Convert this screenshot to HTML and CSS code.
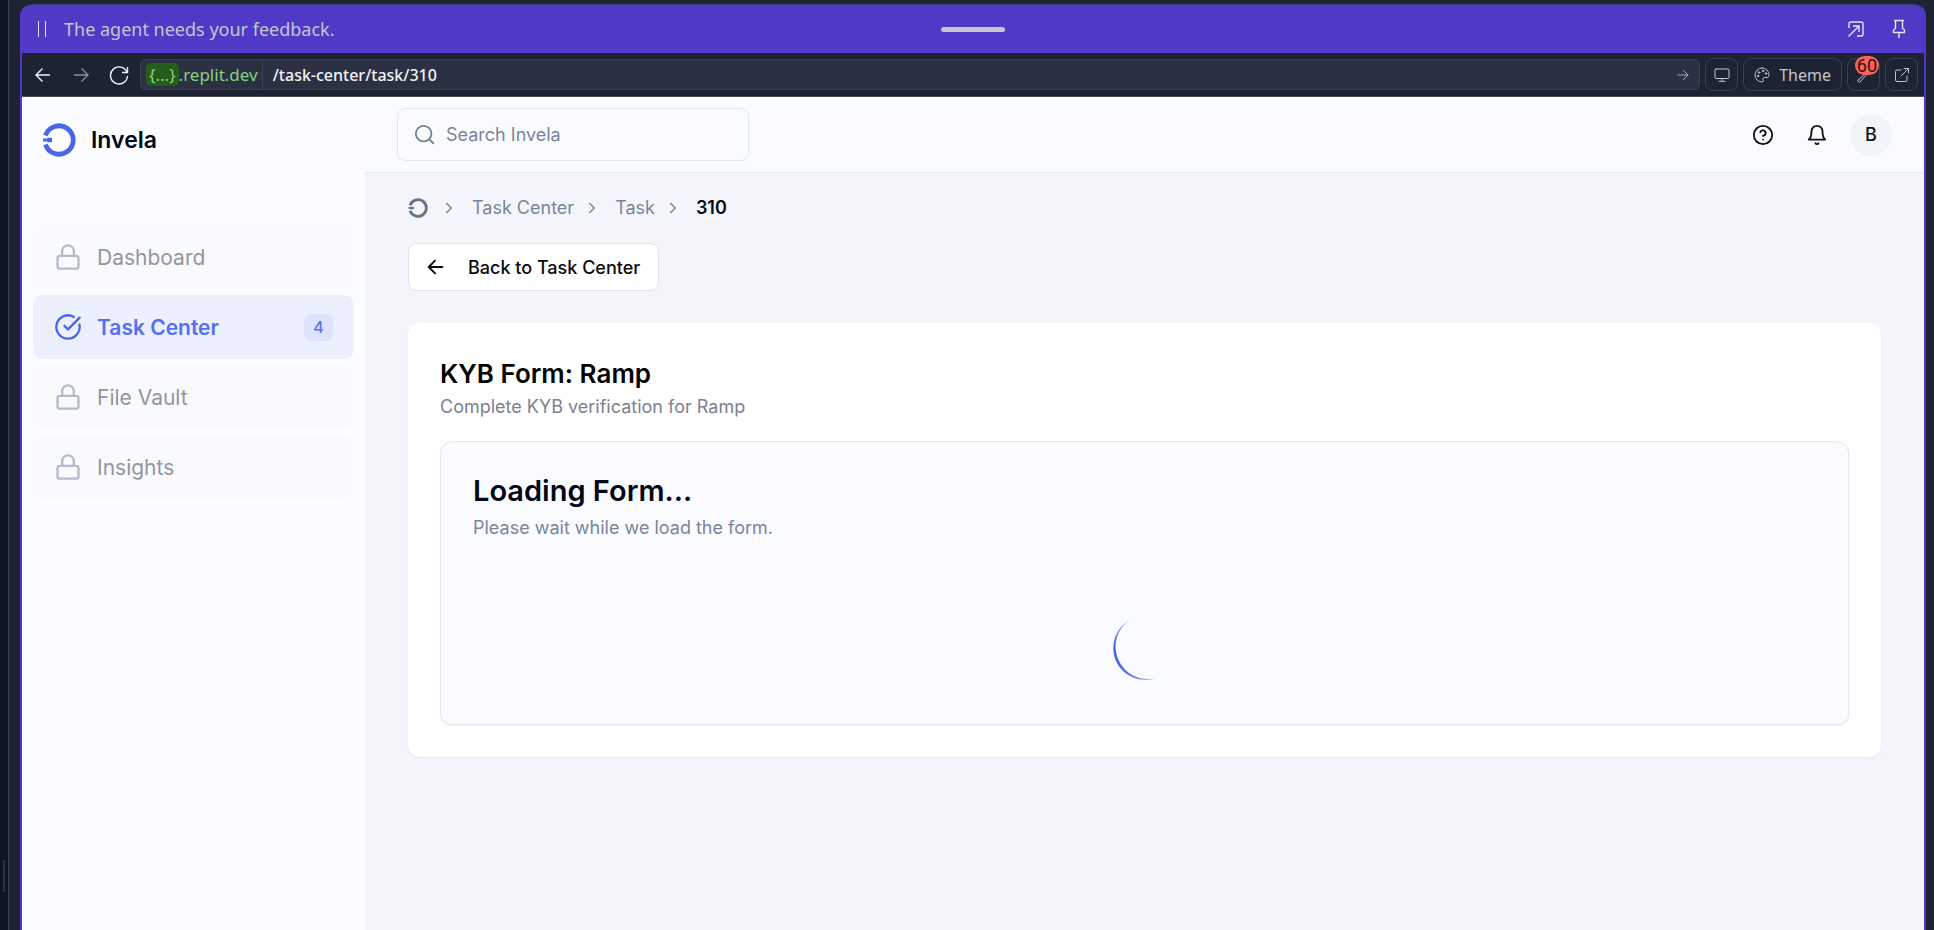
FILE: index.html
```html
<!DOCTYPE html>
<html lang="en">
<head>
<meta charset="utf-8">
<title>Invela – Task 310</title>
<link rel="stylesheet" href="styles.css">
</head>
<body>
<svg class="defs" aria-hidden="true">
  <symbol id="lock" viewBox="0 0 24 24"><rect x="3" y="11" width="18" height="11" rx="2"/><path d="M7 11V7a5 5 0 0 1 10 0v4"/></symbol>
  <symbol id="chevron" viewBox="0 0 24 24"><path d="m9 18 6-6-6-6"/></symbol>
  <symbol id="logo" viewBox="0 0 34 34"><path d="M3.500 12.600A14.200 14.200 0 1 1 3.500 21.400" stroke-width="4.800"/><path d="M1 15.400h4.500v-.6h4.500v4.400h-4.500v-.6H1z" fill="currentColor" stroke="none"/></symbol>
</svg>
<div class="desk">
  <aside class="rail"><span class="rail-grip"></span></aside>
  <div class="window">
    <header class="agent-bar">
      <div class="agent-status">
        <svg class="icon-pause" viewBox="0 0 12 16"><path d="M2.500 0v16M9.500 0v16"/></svg>
        <span>The agent needs your feedback.</span>
      </div>
      <span class="drag-handle"></span>
      <div class="agent-actions">
        <button class="bare" aria-label="Open out"><svg class="icon thin" viewBox="0 0 20 20"><path d="M3 9V5a2 2 0 0 1 2-2h10a2 2 0 0 1 2 2v10a2 2 0 0 1-2 2h-4M2.500 17.500 13 7M7 7h6v6"/></svg></button>
        <button class="bare" aria-label="Pin"><svg class="icon thin" viewBox="0 0 20 20"><path d="M5 1.500h10M6.500 1.500v8L4.500 11v2.500h11V11l-2-1.500v-8M10 13.500V19"/></svg></button>
      </div>
    </header>
    <div class="toolbar">
      <div class="history">
        <button class="bare" aria-label="Back"><svg class="icon thin" viewBox="0 0 20 20"><path d="M17 10H3M9.500 3.500 3 10l6.500 6.500"/></svg></button>
        <button class="bare dim" aria-label="Forward"><svg class="icon thin" viewBox="0 0 20 20"><path d="M3 10h14M10.500 3.500 17 10l-6.500 6.500"/></svg></button>
        <button class="bare" aria-label="Reload"><svg class="icon thin" viewBox="0 0 20 20"><path d="M18.500 2v5.500H13M18 7.500A8.500 8.500 0 1 0 18.500 11"/></svg></button>
      </div>
      <div class="url">
        <span class="host"><span class="chip">{...}</span>.replit.dev</span>
        <input class="path" aria-label="Path" value="/task-center/task/310">
        <button class="bare go" aria-label="Go"><svg class="icon small" viewBox="0 0 16 16"><path d="M3 8h10M8.500 3.500 13 8l-4.500 4.500"/></svg></button>
      </div>
      <button class="tool" aria-label="Device"><svg class="icon small" viewBox="0 0 16 16"><rect x="1" y="2" width="14" height="9.500" rx="1"/><path d="M8 11.500V14M5 14.300h6"/></svg></button>
      <button class="tool wide"><svg class="icon small" viewBox="0 0 16 16"><path d="M8 1a7 7 0 0 0 0 14c1.500 0 1.700-1.200 1.100-2-.8-1.300 0-2.500 1.400-2.500H13c1.300 0 2-1 2-2.500C15 4 12 1 8 1z"/><circle cx="5" cy="5.500" r=".8"/><circle cx="9" cy="4" r=".8"/><circle cx="4" cy="9" r=".8"/><circle cx="12" cy="6.500" r=".8"/></svg>Theme</button>
      <button class="tool" aria-label="Dev tools"><svg class="icon small" viewBox="0 0 16 16"><path d="M9.500 6.500 2 13a1.500 1.500 0 0 0 2 2l6.500-7.500c3 .8 5-1.500 4.500-4.500l-2.500 2-2-2 2-2C9.500.500 8.500 4 9.500 6.500z"/></svg><span class="count">60</span></button>
      <button class="tool" aria-label="New tab"><svg class="icon small" viewBox="0 0 16 16"><path d="M7 3H3a1.500 1.500 0 0 0-1.500 1.500V13A1.500 1.500 0 0 0 3 14.500h8.500A1.500 1.500 0 0 0 13 13V9M7 9l7.500-7.500M10 1.500h4.500V6"/></svg></button>
    </div>
    <div class="app">
      <nav class="sidebar">
        <div class="brand"><svg class="brand-logo"><use href="#logo"/></svg>Invela</div>
        <ul class="menu">
          <li><a class="item" href="#"><svg class="icon nav"><use href="#lock"/></svg>Dashboard</a></li>
          <li><a class="item active" href="#"><svg class="icon nav" viewBox="0 0 24 24"><path d="M21.800 10A10 10 0 1 1 17 3.340"/><path d="m9 11 3 3L22 4"/></svg>Task Center<span class="badge">4</span></a></li>
          <li><a class="item" href="#"><svg class="icon nav"><use href="#lock"/></svg>File Vault</a></li>
          <li><a class="item" href="#"><svg class="icon nav"><use href="#lock"/></svg>Insights</a></li>
        </ul>
      </nav>
      <div class="content">
        <header class="topbar">
          <label class="search"><svg class="icon mid" viewBox="0 0 24 24"><circle cx="10.500" cy="10.500" r="8.500"/><path d="m21 21-4.500-4.500"/></svg><input type="search" aria-label="Search Invela" placeholder="Search Invela"></label>
          <div class="account">
            <button class="bare" aria-label="Help"><svg class="icon mid" viewBox="0 0 24 24"><circle cx="12" cy="12" r="10"/><path d="M9.090 9a3 3 0 0 1 5.830 1c0 2-3 3-3 3M12 17h.01"/></svg></button>
            <button class="bare" aria-label="Notifications"><svg class="icon mid" viewBox="0 0 24 24"><path d="M6 8a6 6 0 0 1 12 0c0 7 3 9 3 9H3s3-2 3-9M10.300 21a1.940 1.940 0 0 0 3.400 0"/></svg></button>
            <button class="avatar">B</button>
          </div>
        </header>
        <main class="page">
          <nav class="crumbs" aria-label="Breadcrumb">
            <a href="#" aria-label="Home"><svg class="crumb-logo"><use href="#logo"/></svg></a>
            <svg class="icon sep"><use href="#chevron"/></svg>
            <a href="#">Task Center</a>
            <svg class="icon sep tight"><use href="#chevron"/></svg>
            <a href="#">Task</a>
            <svg class="icon sep tight"><use href="#chevron"/></svg>
            <span class="current">310</span>
          </nav>
          <button class="back"><svg class="icon mid" viewBox="0 0 24 24"><path d="m11 19-7-7 7-7M19 12H4"/></svg>Back to Task Center</button>
          <section class="card">
            <h1>KYB Form: Ramp</h1>
            <p class="lead">Complete KYB verification for Ramp</p>
            <div class="panel">
              <h2>Loading Form...</h2>
              <p class="note">Please wait while we load the form.</p>
              <div class="loader">
                <svg class="spinner" viewBox="0 0 64 64" role="img" aria-label="Loading">
                  <defs><linearGradient id="fade" gradientUnits="userSpaceOnUse" x1="30" y1="30" x2="3" y2="41"><stop offset="0" stop-color="#4965ec" stop-opacity=".4"/><stop offset="1" stop-color="#4965ec"/></linearGradient></defs>
                  <path fill="url(#fade)" d="M18 3.200A32 32 0 0 0 43 62A32.300 32.300 0 0 1 18 3.200z"/>
                </svg>
              </div>
            </div>
          </section>
        </main>
      </div>
    </div>
  </div>
</div>
</body>
</html>
```
FILE: styles.css
```css
* { box-sizing: border-box; }
body { margin: 0; font-family: Inter, "Liberation Sans", sans-serif; font-size: 18px; color: #020817; background: #1d2333; }
h1, h2, p, ul { margin: 0; padding: 0; }
ul { list-style: none; }
a { color: inherit; text-decoration: none; }
button, input { font: inherit; color: inherit; }
svg { display: block; flex: none; }
.defs { position: absolute; width: 0; height: 0; }

.desk { display: flex; min-height: 100vh; }
.rail { width: 9px; margin-right: 11px; background: #0e1525; border-right: 1px solid #3c4253; display: flex; align-items: flex-end; padding: 0 0 38px 3px; }
.rail-grip { width: 2px; height: 32px; background: #2b3245; }
.window { flex: 1; min-width: 0; margin: 4px 8px 0 0; display: flex; flex-direction: column; border: 2px solid #4f39c6; border-top: 1px solid #3a3970; border-bottom: 0; border-radius: 12px 12px 0 0; background: #4f39c6; }

.icon { width: 24px; height: 24px; fill: none; stroke: currentColor; stroke-width: 2; stroke-linecap: round; stroke-linejoin: round; }
.icon.thin { width: 20px; height: 20px; stroke-width: 1.4; stroke-linecap: butt; stroke-linejoin: miter; }
.icon.small { width: 16px; height: 16px; stroke-width: 1; }
.icon.mid { width: 22px; height: 22px; }
.icon.nav { width: 28px; height: 28px; }
.bare { border: 0; padding: 0; background: none; }

.agent-bar { height: 48px; padding: 0 15px 0 14px; display: grid; grid-template-columns: 1fr auto 1fr; align-items: center; color: #e8e6f5; }
.agent-status { display: flex; align-items: center; gap: 16px; font-family: "Noto Sans", sans-serif; font-size: 18px; color: #c6c6d2; }
.icon-pause { width: 12px; height: 16px; stroke: #e8e6f5; stroke-width: 1; }
.drag-handle { width: 64px; height: 5px; border-radius: 3px; background: #c3c6cc; }
.agent-actions { display: flex; justify-content: flex-end; gap: 23px; }

.toolbar { height: 44px; padding: 0 6px 0 11px; display: flex; align-items: center; gap: 5px; background: #1d2333; border-bottom: 1px solid #4a4d5c; color: #f2f4f8; font-family: "Noto Sans", sans-serif; font-size: 17px; }
.history { display: flex; gap: 18px; padding-right: 6px; }
.dim { color: #8b909d; }
.url { flex: 1; height: 31px; display: flex; align-items: stretch; background: #2b3043; border: 1px solid #3b4055; border-radius: 6px; }
.host { display: flex; align-items: center; padding: 0 4px 0 5px; color: #84d27c; border-right: 1px solid #3b4055; }
.chip { padding: 0 3px; line-height: 23px; border-radius: 5px; background: #255c1e; }
.path { flex: 1; min-width: 0; border: 0; padding: 0 10px; background: none; font-size: 16px; font-weight: 500; outline: 0; }
.go { padding: 0 8px; color: #a9adb8; }
.tool { position: relative; min-width: 33px; height: 33px; padding: 0; display: flex; align-items: center; justify-content: center; background: none; border: 1px solid #3b4055; border-radius: 8px; color: #c2c5cc; }
.tool.wide { padding: 0 10px; gap: 9px; font-size: 16px; }
.count { position: absolute; top: -3px; right: 0; padding: 0 2px; border-radius: 10px; background: #f1675f; color: #3b0d0d; font-family: Roboto, sans-serif; font-size: 18px; line-height: 19px; }

.app { flex: 1; display: flex; background: #f4f5fa; }
.sidebar { width: 343px; background: #fbfcff; }
.brand { display: flex; align-items: center; gap: 15px; padding: 26px 20px 0; font-size: 23px; line-height: 34px; font-weight: 600; color: #020817; }
.brand-logo { width: 34px; height: 34px; fill: none; stroke: currentColor; color: #4965ec; }
.menu { display: grid; gap: 6px; padding: 68px 11px 0; }
.item { display: flex; align-items: center; gap: 15px; height: 64px; padding: 0 21px; border-radius: 10px; background: #f9fafe; color: #94959d; font-size: 21px; }
.item .nav { color: #b4bccb; }
.item.active { background: #ebeffe; color: #5670ee; font-weight: 600; }
.item.active .nav { color: #4965ec; }
.badge { margin-left: auto; width: 29px; line-height: 27px; text-align: center; border-radius: 8px; background: #dde3fc; font-size: 16px; font-weight: 500; color: #5b74ee; }

.content { flex: 1; min-width: 0; }
.topbar { display: flex; align-items: center; justify-content: space-between; height: 76px; padding: 0 32px; background: #fafbff; border-bottom: 1px solid #e4e7ec; }
.search { display: flex; align-items: center; gap: 10px; width: 352px; height: 53px; padding: 0 16px; border: 1px solid #e2e8f0; border-radius: 8px; color: #718096; }
.search input { flex: 1; min-width: 0; border: 0; padding: 0; background: none; outline: 0; }
.search input::placeholder { color: #78859b; opacity: 1; }
.account { display: flex; align-items: center; gap: 32px; color: #111; }
.avatar { width: 42px; height: 42px; margin-left: -10px; border: 0; padding: 0; border-radius: 50%; background: #f1f5f9; font-size: 18px; font-weight: 500; }

.page { padding: 22px 43px 43px; }
.crumbs { display: flex; align-items: center; line-height: 26px; color: #78859b; }
.crumb-logo { width: 20px; height: 20px; fill: none; stroke: currentColor; color: #64748b; }
.sep { width: 18px; height: 18px; margin: 0 14px 0 12px; }
.sep.tight { margin: 0 14px 0 9px; }
.current { font-weight: 600; color: #020817; }
.back { display: flex; align-items: center; gap: 21px; height: 48px; margin: 22px 0 32px; padding: 0 18px 0 16px; border: 1px solid #e2e4ea; border-radius: 8px; background: #fff; color: #0a0a0a; font-weight: 500; }
.card { padding: 32px; border-radius: 12px; background: #fff; box-shadow: 0 1px 2px rgba(15, 23, 42, .06); }
h1 { font-size: 26px; line-height: 38px; font-weight: 600; color: #000; }
.lead { line-height: 28px; color: #7b8190; }
.panel { margin-top: 20px; padding: 30px 32px 44px; border: 1px solid #e2e8f0; border-radius: 12px; background: #fafbff; box-shadow: 0 1px 2px rgba(15, 23, 42, .06); }
h2 { font-size: 29px; line-height: 38px; font-weight: 600; }
.note { line-height: 35px; color: #78859b; }
.loader { display: flex; justify-content: center; padding-top: 71px; }
.spinner { width: 64px; height: 64px; }
```
